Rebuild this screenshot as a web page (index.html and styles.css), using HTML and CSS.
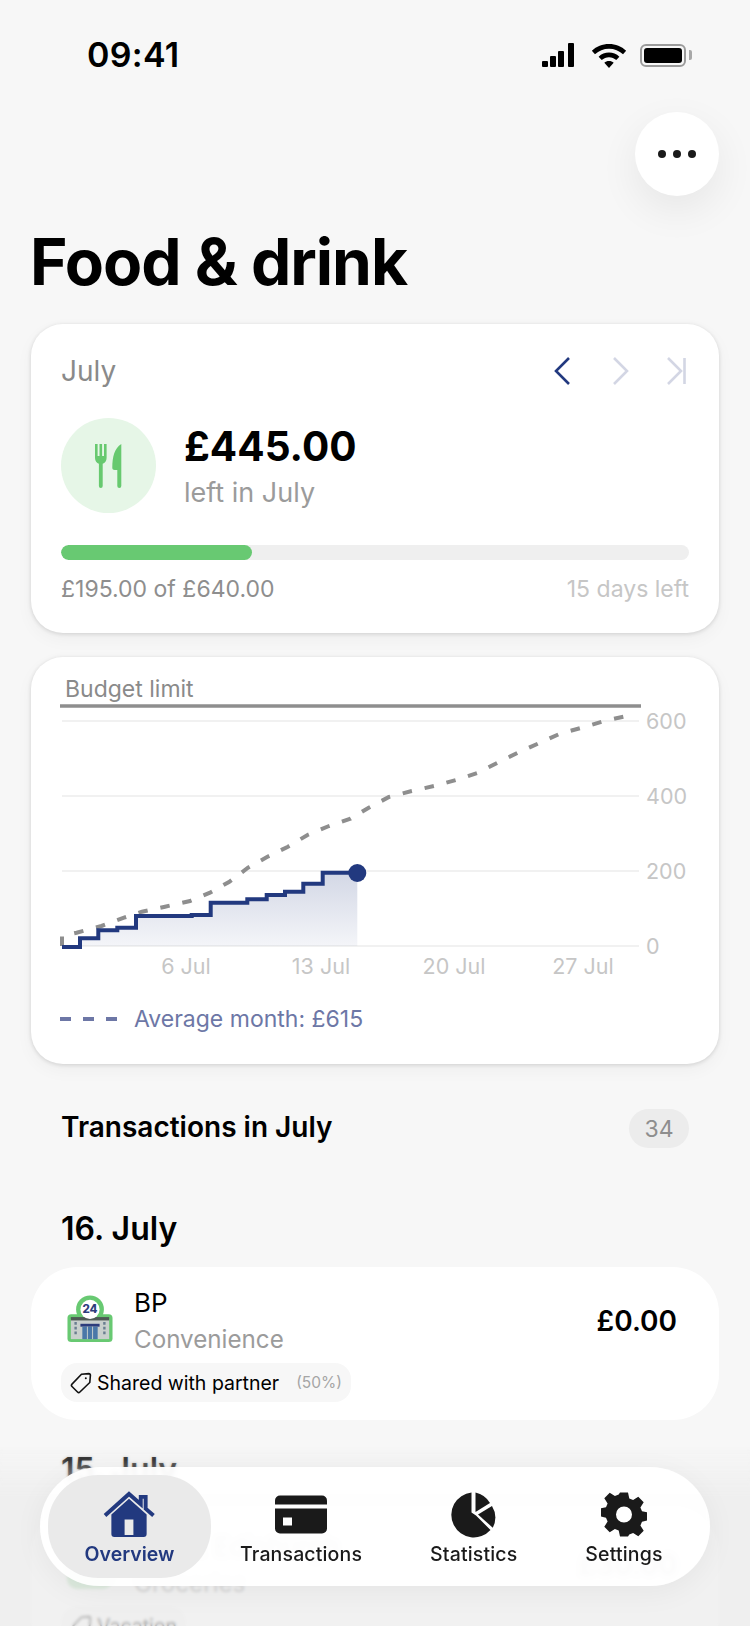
FILE: index.html
```
<!DOCTYPE html>
<html lang="en">
<head>
<meta charset="utf-8">
<title>Food &amp; drink</title>
<link rel="stylesheet" href="styles.css">
</head>
<body>
<div class="screen">
  <header class="status">
    <span class="time">09:41</span>
    <div class="status-icons">
      <svg class="sig" width="32" height="24" viewBox="0 0 32 24"><rect x="0" y="18" width="6" height="6" rx="1"/><rect x="8" y="13" width="6" height="11" rx="1"/><rect x="16" y="8" width="6" height="16" rx="1"/><rect x="26" y="0" width="6" height="24" rx="1"/></svg>
      <svg class="wifi" width="38" height="27" viewBox="0 0 36 26"><path d="M18 2C11.500 2 6 4.300 1.500 8.500L4.500 11.800C8.200 8.300 12.800 6.400 18 6.400S27.800 8.300 31.500 11.800L34.500 8.500C30 4.300 24.500 2 18 2Z"/><path d="M18 10.200C14.200 10.200 10.800 11.600 8 14.200L11 17.400C13 15.600 15.300 14.600 18 14.600S23 15.600 25 17.400L28 14.200C25.200 11.600 21.800 10.200 18 10.200Z"/><path d="M18 18.300C16.200 18.300 14.700 18.900 13.500 20L18 25L22.500 20C21.300 18.900 19.800 18.300 18 18.300Z"/></svg>
      <div class="battery"><div class="battery-body"><div class="battery-level"></div></div><div class="battery-cap"></div></div>
    </div>
  </header>

  <div class="top-action">
    <button class="more" aria-label="More"><i></i><i></i><i></i></button>
  </div>

  <h1 class="title">Food &amp; drink</h1>

  <section class="card budget">
    <div class="budget-head">
      <span class="month">July</span>
      <div class="pager">
        <svg width="18" height="30" viewBox="0 0 18 30" class="pg-on"><path d="M16 2 3 15l13 13"/></svg>
        <svg width="18" height="30" viewBox="0 0 18 30" class="pg-off"><path d="M2 2l13 13L2 28"/></svg>
        <svg width="20" height="30" viewBox="0 0 20 30" class="pg-off pg-end"><path d="M2 2l13 13L2 28M18.500 2v26"/></svg>
      </div>
    </div>
    <div class="budget-main">
      <div class="cat-icon">
        <svg width="26.500" height="44" viewBox="0 0 26.500 44"><path d="M0 0h2.600v12h1.900V0h2.600v12h1.900V0h2.600v14c0 3-1.700 5-3.900 5.800V42a1.900 1.900 0 0 1-3.800 0V19.800C1.700 19 0 17 0 14Z"/><path d="M26.300 0v42a2 2 0 0 1-4 0V26h-2.600c-1.500 0-2.400-.8-2.400-2.200C17.300 13 19.500 4 26.300 0Z"/></svg>
      </div>
      <div class="budget-text">
        <div class="amount">£445.00</div>
        <div class="left-in">left in July</div>
      </div>
    </div>
    <div class="progress"><div class="progress-fill" style="width:30.4%"></div></div>
    <div class="budget-foot">
      <span>£195.00 of £640.00</span>
      <span class="days">15 days left</span>
    </div>
  </section>

  <section class="card chart-card">
    <svg class="chart" width="688" height="340" viewBox="31 656 688 340">
      <defs>
        <linearGradient id="area" x1="0" y1="0" x2="0" y2="1">
          <stop offset="0" stop-color="#22397f" stop-opacity=".2"/>
          <stop offset="1" stop-color="#22397f" stop-opacity=".05"/>
        </linearGradient>
      </defs>
      <text x="65" y="696" class="limit-label">Budget limit</text>
      <line x1="60" y1="705" x2="641" y2="705" class="limit-line"/>
      <line x1="62" y1="720" x2="639" y2="720" class="grid"/>
      <line x1="62" y1="795" x2="639" y2="795" class="grid"/>
      <line x1="62" y1="870" x2="639" y2="870" class="grid"/>
      <line x1="62" y1="945" x2="639" y2="945" class="grid"/>
      <text x="646" y="728" class="axis">600</text>
      <text x="646" y="803" class="axis">400</text>
      <text x="646" y="878" class="axis">200</text>
      <text x="646" y="953" class="axis">0</text>
      <text x="186" y="973" class="axis mid">6 Jul</text>
      <text x="321" y="973" class="axis mid">13 Jul</text>
      <text x="454" y="973" class="axis mid">20 Jul</text>
      <text x="583" y="973" class="axis mid">27 Jul</text>
      <path class="avg" d="M62 945V935L76.600 931.700 101.500 925 124 916.700 142 910.700 165 905.700 190 900 210 891.700 229 881 248 866.700 267 856 288 845.700 307.500 834 329 825 350.500 817.700 368.700 806.700 389 796 411.700 790 434 785 456 779 478 771.700 499 761 518 751.700 540 741.700 560 732.700 582 726.700 604 720 627 715H634"/>
      <path fill="url(#area)" d="M62 945H80V937.300H98.300V929.300H117.300V926.700H136V915H191.700V914H210.700V901.700H247.300V898.300H266.700V894H285V890.700H303.300V882.700H322.700V871.700H357.300V945Z"/>
      <path class="spent" d="M62 946H80V937.300H98.300V929.300H117.300V926.700H136V915H191.700V914H210.700V901.700H247.300V898.300H266.700V894H285V890.700H303.300V882.700H322.700V871.700H357.300"/>
      <circle cx="357.300" cy="872" r="9" class="spent-dot"/>
    </svg>
    <div class="legend">
      <span class="legend-dash"><i></i><i></i><i></i></span>
      <span>Average month: £615</span>
    </div>
  </section>

  <div class="tx-head">
    <h2>Transactions in July</h2>
    <span class="count">34</span>
  </div>

  <h3 class="day">16. July</h3>
  <article class="tx">
    <div class="tx-row">
      <svg class="store" width="46" height="48" viewBox="0 0 48 50">
        <circle cx="24" cy="15" r="14.500" class="store-halo"/>
        <rect x="0.500" y="20" width="47" height="29" rx="4" class="store-halo"/>
        <rect x="4" y="25" width="40" height="21" fill="#c9d0cd"/>
        <rect x="4" y="23" width="40" height="3.500" fill="#4e5a55"/>
        <circle cx="24" cy="15" r="10" fill="#fff"/>
        <text x="24" y="19" class="store-num">24</text>
        <rect x="14" y="30" width="20" height="3" fill="#2d3d7c"/>
        <rect x="16" y="33" width="16" height="13" fill="#4a78a8"/>
        <path d="M21.300 33v13M26.700 33v13" stroke="#c9d0cd"/>
        <path d="M9 28v15M39 28v15" stroke="#6a7f90" stroke-width="2.500" stroke-dasharray="3 2"/>
      </svg>
      <div class="tx-names">
        <div class="tx-name">BP</div>
        <div class="tx-cat">Convenience</div>
      </div>
      <div class="tx-amount">£0.00</div>
    </div>
    <div class="tag">
      <svg width="22" height="22" viewBox="0 0 22 22"><path d="M11.500 2.200 18.700 1.600c1 0 1.700.7 1.700 1.700l-.6 7.200L9.900 20a1.700 1.700 0 0 1-2.400 0L2 14.500a1.700 1.700 0 0 1 0-2.400Z"/><circle cx="15.800" cy="6.200" r="1" class="tag-dot"/></svg>
      <span>Shared with partner</span>
      <small>(50%)</small>
    </div>
  </article>

  <h3 class="day day-next">15. July</h3>
  <article class="tx tx-next">
    <div class="tx-row">
      <div class="ghost-icon"></div>
      <div class="tx-names">
        <div class="tx-name ghost-name">E Edinburgh</div>
        <div class="tx-cat">Groceries</div>
      </div>
      <div class="tx-amount">£30.00</div>
    </div>
    <div class="tag tag-plain">
      <svg width="22" height="22" viewBox="0 0 22 22"><path d="M11.500 2.200 18.700 1.600c1 0 1.700.7 1.700 1.700l-.6 7.200L9.900 20a1.700 1.700 0 0 1-2.400 0L2 14.500a1.700 1.700 0 0 1 0-2.400Z"/></svg>
      <span>Vacation</span>
    </div>
  </article>

  <div class="bottom-fade"></div>

  <nav class="nav">
    <a class="nav-item active">
      <svg width="54" height="48" viewBox="0 0 54 48"><path class="house" d="M9 24 27 8l18 16v20a3 3 0 0 1-3 3H12a3 3 0 0 1-3-3Zm13.500 5v16h9V29Z" fill-rule="evenodd"/><path class="roof" d="M2.500 25 27 3l12 10.500V6h5v12l8 7"/></svg>
      <span>Overview</span>
    </a>
    <a class="nav-item">
      <svg width="52" height="38" viewBox="0 0 52 38"><path d="M0 9V5a5 5 0 0 1 5-5h42a5 5 0 0 1 5 5v4Z"/><path fill-rule="evenodd" d="M0 13h52v20a5 5 0 0 1-5 5H5a5 5 0 0 1-5-5Zm8 9v8h9v-8Z"/></svg>
      <span>Transactions</span>
    </a>
    <a class="nav-item">
      <svg width="46" height="46" viewBox="0 0 46 46"><path d="M20.500 1A22.500 22.500 0 1 0 39.500 38.500L25 24 20.500 21Z"/><path d="M24.500 1V20.500L39 11.500A22.500 22.500 0 0 0 24.500 1Z"/><path d="M41 14.500 27 23l14.800 13.200A22.500 22.500 0 0 0 41 14.500Z"/></svg>
      <span>Statistics</span>
    </a>
    <a class="nav-item">
      <svg width="46" height="46" viewBox="0 0 46 46"><path fill-rule="evenodd" d="M19 1h8l1.300 6 3.800 1.600 5.200-3.300 5.400 5.400-3.300 5.200 1.600 3.800 5.800 1.300v7.900l-5.800 1.300-1.600 3.900 3.300 5.200-5.400 5.400-5.200-3.300-3.800 1.600L27 45h-8l-1.300-6-3.800-1.600-5.200 3.300-5.400-5.400 3.300-5.200L5 26.200-.8 24.900V17l5.800-1.300 1.600-3.800-3.300-5.200 5.400-5.400 5.200 3.300 3.800-1.600ZM23 15a8 8 0 1 0 0 16 8 8 0 0 0 0-16Z"/></svg>
      <span>Settings</span>
    </a>
  </nav>
</div>
</body>
</html>
```
FILE: styles.css
```
* { box-sizing: border-box; }
html, body { margin: 0; padding: 0; }
body { font-family: Inter, "Noto Sans", sans-serif; color: #000; background: #f7f7f7; }
.screen { position: relative; width: 750px; height: 1626px; overflow: hidden; background: #f7f7f7; padding: 0 31px; }

.status { display: flex; justify-content: space-between; align-items: center; height: 24px; margin-top: 43px; padding: 0 0 0 56px; }
.time { font-size: 34px; font-weight: 600; line-height: 24px; letter-spacing: .3px; }
.status-icons { display: flex; align-items: center; gap: 18px; margin-right: 27px; }
.sig, .wifi { fill: #000; display: block; }
.wifi { margin-left: -2.500px; margin-right: -5.500px; }
.battery { display: flex; align-items: center; gap: 3px; }
.battery-body { width: 46px; height: 23px; border: 2px solid #9b9b9b; border-radius: 6px; padding: 2px; }
.battery-level { width: 100%; height: 100%; background: #000; border-radius: 3px; }
.battery-cap { width: 3px; height: 10px; background: #a8a8a8; border-radius: 0 2px 2px 0; }

.top-action { display: flex; justify-content: flex-end; margin-top: 45px; }
.more { width: 84px; height: 84px; border: 0; border-radius: 50%; background: #fff; display: flex; align-items: center; justify-content: center; gap: 7px; padding: 0; box-shadow: 0 14px 40px rgba(0,0,0,.07); }
.more i { width: 8px; height: 8px; border-radius: 50%; background: #1a1a1a; }

.title { margin: 28px 0 0 -1px; font-size: 64px; line-height: 76px; font-weight: 700; letter-spacing: -1px; }

.card { background: #fff; border-radius: 32px; box-shadow: 0 1px 4px rgba(0,0,0,.14), 0 6px 18px rgba(0,0,0,.04); }
.budget { margin-top: 24px; height: 309px; padding: 30px 30px 0; }
.budget-head { display: flex; justify-content: space-between; align-items: center; height: 34px; }
.month { font-size: 28px; color: #8a8a8a; }
.pager { display: flex; gap: 41px; margin-right: 3px; }
.pager svg { fill: none; stroke-width: 2.600; display: block; }
.pg-on { stroke: #22397f; }
.pg-off { stroke: #d3d6e4; }
.pg-end { margin-left: -5px; }
.budget-main { display: flex; align-items: center; gap: 28px; margin-top: 30px; }
.cat-icon { width: 95px; height: 95px; border-radius: 50%; background: #e6f6e7; display: flex; align-items: center; justify-content: center; }
.cat-icon svg { fill: #67c96f; display: block; }
.budget-text { display: flex; flex-direction: column; gap: 5px; padding-top: 2px; }
.amount { font-size: 40.500px; font-weight: 700; line-height: 48px; }
.left-in { font-size: 27px; line-height: 34px; color: #9b9b9b; }
.progress { height: 15px; margin-top: 32px; border-radius: 8px; background: #efefef; overflow: hidden; }
.progress-fill { height: 100%; background: #68c972; border-radius: 8px; }
.budget-foot { display: flex; justify-content: space-between; margin-top: 15px; font-size: 23px; line-height: 28px; color: #8e8e8e; }
.days { color: #c6c6c6; }

.chart-card { margin-top: 24px; height: 407px; display: flex; flex-direction: column; }
.chart { display: block; }
.limit-label { font-size: 23px; fill: #8a8a8a; }
.limit-line { stroke: #8e8e8e; stroke-width: 3.500; }
.grid { stroke: #ececec; stroke-width: 1.500; }
.axis { font-size: 21.500px; fill: #c6c6c6; }
.mid { text-anchor: middle; }
.avg { fill: none; stroke: #8e8e8e; stroke-width: 4; stroke-dasharray: 9.500 13; }
.spent { fill: none; stroke: #22397f; stroke-width: 4; }
.spent-dot { fill: #22397f; }
.legend { display: flex; align-items: center; gap: 17px; padding-left: 29px; margin-top: 7px; font-size: 23px; line-height: 30px; color: #6d77a6; }
.legend-dash { display: flex; gap: 12px; }
.legend-dash i { width: 11px; height: 4px; background: #6d77a6; }

.tx-head { display: flex; justify-content: space-between; align-items: center; margin-top: 45px; padding: 0 30px; height: 39px; }
.tx-head h2 { margin: 0; padding-bottom: 4px; font-size: 28px; font-weight: 600; }
.count { width: 60px; height: 39px; border-radius: 20px; background: #ececec; color: #8e8e8e; font-size: 23px; display: flex; align-items: center; justify-content: center; }
.day { margin: 63px 0 0 30px; font-size: 32px; line-height: 36px; font-weight: 600; }
.tx { margin-top: 20px; height: 153px; padding: 26px 42px 0 30px; background: #fff; border-radius: 46px; }
.tx-row { display: flex; align-items: flex-start; }
.store { display: block; margin: 2px 21px 2px 6px; flex: none; }
.store-halo { fill: #68c972; }
.store-num { font-size: 12px; font-weight: 800; fill: #2d3d7c; text-anchor: middle; }
.tx-names { flex: 1; }
.tx-name { font-size: 26px; line-height: 32px; margin-top: -6px; }
.tx-cat { font-size: 24.200px; line-height: 32px; margin-top: 5px; color: #9b9b9b; }
.tx-amount { font-size: 28px; font-weight: 600; line-height: 34px; margin-top: 11px; }
.tag { display: inline-flex; align-items: center; gap: 5px; height: 39px; margin-top: 7px; padding: 0 9px; background: #f7f7f7; border-radius: 16px; font-size: 19.500px; }
.tag svg { fill: none; stroke: #111; stroke-width: 1.600; display: block; }
.tag .tag-dot { fill: #111; stroke: none; }
.tag small { font-size: 15.500px; color: #a5a5a5; margin-left: 12px; }
.day-next { margin-top: 32px; }
.tx-next { padding-top: 29px; }
.tag-plain { margin-top: 6px; }
.ghost-name { padding-left: 57px; }
.ghost-icon { width: 46px; height: 48px; margin: 4px 21px 0 6px; background: #b5e4b9; border-radius: 10px; flex: none; }

.bottom-fade { position: absolute; left: 0; right: 0; bottom: 0; height: 180px; background: rgba(235,235,235,.72); backdrop-filter: blur(1.500px); -webkit-mask-image: linear-gradient(to bottom, transparent, #000 50px); mask-image: linear-gradient(to bottom, transparent, #000 50px); }
.nav { position: absolute; left: 40px; top: 1467px; width: 670px; height: 119px; padding: 8px; display: flex; gap: 68px; align-items: stretch; border-radius: 60px; background: rgba(255,255,255,.94); backdrop-filter: blur(2px); box-shadow: 0 6px 30px rgba(0,0,0,.05); }
.nav-item { display: flex; flex-direction: column; align-items: center; gap: 4px; padding-top: 16px; font-size: 19.500px; font-weight: 500; color: #1a1a1a; letter-spacing: .15px; }
.nav-item svg { display: block; fill: #1a1a1a; height: 47px; }
.nav-item span { line-height: 24px; }
.nav-item.active { width: 163px; margin-right: -39px; border-radius: 50px; background: rgba(232,232,232,.92); color: #22397f; font-weight: 600; letter-spacing: 0; }
.nav-item.active svg { fill: #22397f; margin-left: -2px; }
.house { fill: #22397f; }
.roof { fill: none; stroke: #22397f; stroke-width: 4; }
```
